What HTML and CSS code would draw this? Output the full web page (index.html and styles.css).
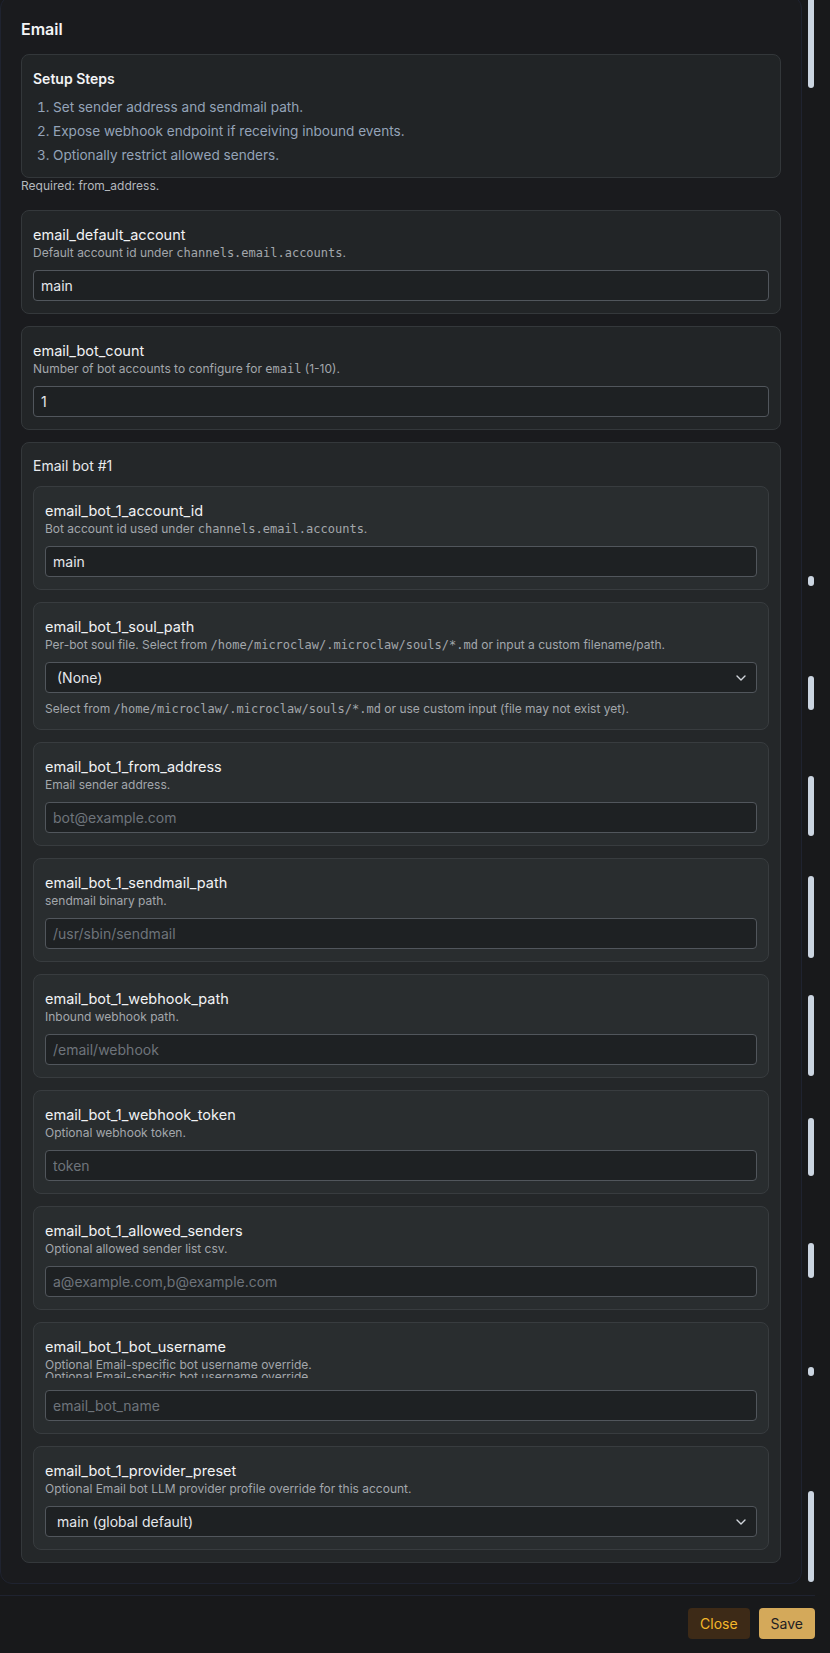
FILE: index.html
```html
<!DOCTYPE html>
<html lang="en">
<head>
<meta charset="utf-8">
<title>Email</title>
<link rel="stylesheet" href="styles.css">
</head>
<body>
<div class="dialog">
  <div class="scroll">
    <section class="panel">
      <h2 class="panel-title">Email</h2>
      <div class="steps">
        <div class="steps-title">Setup Steps</div>
        <ol class="steps-list">
          <li>Set sender address and sendmail path.</li>
          <li>Expose webhook endpoint if receiving inbound events.</li>
          <li>Optionally restrict allowed senders.</li>
        </ol>
      </div>
      <p class="required">Required: from_address.</p>

      <div class="card">
        <div class="label">email_default_account</div>
        <div class="desc">Default account id under <code>channels.email.accounts</code>.</div>
        <input class="field" type="text" value="main">
      </div>

      <div class="card">
        <div class="label">email_bot_count</div>
        <div class="desc">Number of bot accounts to configure for <code>email</code> (1-10).</div>
        <input class="field" type="text" value="1">
      </div>

      <div class="group">
        <div class="group-title">Email bot #1</div>

        <div class="card inner">
          <div class="label">email_bot_1_account_id</div>
          <div class="desc">Bot account id used under <code>channels.email.accounts</code>.</div>
          <input class="field" type="text" value="main">
        </div>

        <div class="card inner">
          <div class="label">email_bot_1_soul_path</div>
          <div class="desc">Per-bot soul file. Select from <code>/home/microclaw/.microclaw/souls/*.md</code> or input a custom filename/path.</div>
          <div class="select-wrap">
            <select class="field select"><option>(None)</option></select>
            <svg class="chev" width="10" height="6" viewBox="0 0 10 6"><path d="M1 1l4 4 4-4" fill="none" stroke="#d1d5db" stroke-width="1.4" stroke-linecap="round" stroke-linejoin="round"/></svg>
          </div>
          <div class="hint">Select from <code>/home/microclaw/.microclaw/souls/*.md</code> or use custom input (file may not exist yet).</div>
        </div>

        <div class="card inner">
          <div class="label">email_bot_1_from_address</div>
          <div class="desc">Email sender address.</div>
          <input class="field" type="text" placeholder="bot@example.com">
        </div>

        <div class="card inner">
          <div class="label">email_bot_1_sendmail_path</div>
          <div class="desc">sendmail binary path.</div>
          <input class="field" type="text" placeholder="/usr/sbin/sendmail">
        </div>

        <div class="card inner">
          <div class="label">email_bot_1_webhook_path</div>
          <div class="desc">Inbound webhook path.</div>
          <input class="field" type="text" placeholder="/email/webhook">
        </div>

        <div class="card inner">
          <div class="label">email_bot_1_webhook_token</div>
          <div class="desc">Optional webhook token.</div>
          <input class="field" type="text" placeholder="token">
        </div>

        <div class="card inner">
          <div class="label">email_bot_1_allowed_senders</div>
          <div class="desc">Optional allowed sender list csv.</div>
          <input class="field" type="text" placeholder="a@example.com,b@example.com">
        </div>

        <div class="card inner">
          <div class="label">email_bot_1_bot_username</div>
          <div class="desc">Optional Email-specific bot username override.</div>
          <div class="desc ghost" aria-hidden="true"><span>Optional Email-specific bot username override.</span></div>
          <input class="field after-ghost" type="text" placeholder="email_bot_name">
        </div>

        <div class="card inner">
          <div class="label">email_bot_1_provider_preset</div>
          <div class="desc">Optional Email bot LLM provider profile override for this account.</div>
          <div class="select-wrap">
            <select class="field select"><option>main (global default)</option></select>
            <svg class="chev" width="10" height="6" viewBox="0 0 10 6"><path d="M1 1l4 4 4-4" fill="none" stroke="#d1d5db" stroke-width="1.4" stroke-linecap="round" stroke-linejoin="round"/></svg>
          </div>
        </div>
      </div>
    </section>

    <div class="thumb t1"></div>
    <div class="thumb t2"></div>
    <div class="thumb t3"></div>
    <div class="thumb t4"></div>
    <div class="thumb t5"></div>
    <div class="thumb t6"></div>
    <div class="thumb t7"></div>
    <div class="thumb t8"></div>
    <div class="thumb t9"></div>
    <div class="thumb t10"></div>
  </div>
  <footer class="footer">
    <button class="btn btn-close">Close</button>
    <button class="btn btn-save">Save</button>
  </footer>
</div>
</body>
</html>
```
FILE: styles.css
```css
* { box-sizing: border-box; }

html, body {
  margin: 0;
  padding: 0;
  background: #18191b;
}

body {
  font-family: Inter, "Noto Sans", "Liberation Sans", sans-serif;
  color: #e5e7eb;
  width: 830px;
  height: 1653px;
  overflow: hidden;
}

.dialog {
  width: 815px;
}

.scroll {
  position: relative;
  height: 1595px;
  overflow: hidden;
}

.panel {
  width: 802px;
  margin-top: -4px;
  background: #1a1b1e;
  border: 1px solid #1f2330;
  border-radius: 12px;
  padding: 20px 20px 20px 20px;
}

.panel-title {
  margin: 0 0 13px;
  font-size: 16px;
  line-height: 24px;
  font-weight: 600;
  color: #f3f4f6;
}

.steps {
  background: #212426;
  border: 1px solid #33373a;
  border-radius: 8px;
  padding: 14px 11px 12px;
}

.steps-title {
  font-size: 14px;
  line-height: 20px;
  font-weight: 600;
  color: #f3f4f6;
  margin-bottom: 8px;
}

.steps-list {
  margin: 0;
  padding-left: 20px;
  color: #94a3b8;
  font-size: 13.6px;
  line-height: 20px;
}

.steps-list li + li {
  margin-top: 4px;
}

.required {
  margin: 0 0 16px;
  font-size: 12px;
  line-height: 16px;
  color: #b4b8bd;
}

.card {
  background: #222527;
  border: 1px solid #34383b;
  border-radius: 8px;
  padding: 14px 11px 12px;
  margin-bottom: 12px;
}

.card.inner {
  background: #292d2f;
  border-color: #383c3f;
}

.group .card.inner:last-child {
  margin-bottom: 0;
}

.label {
  font-size: 14.5px;
  line-height: 20px;
  font-weight: 400;
  color: #f1f2f4;
}

.desc, .hint {
  font-size: 12px;
  line-height: 16px;
  color: #a3a7ac;
}

.hint {
  margin-top: 8px;
}

code {
  font-family: "DejaVu Sans Mono", "Liberation Mono", monospace;
  font-size: 12px;
}

.ghost {
  height: 6px;
  margin-top: -1px;
  overflow: hidden;
}

.ghost span {
  display: block;
  margin-top: -3px;
}

.field {
  display: block;
  width: 100%;
  height: 31px;
  margin-top: 9px;
  background: #1e2123;
  border: 1px solid #51565c;
  border-radius: 4px;
  padding: 0 7px;
  font-family: Inter, "Noto Sans", "Liberation Sans", sans-serif;
  font-size: 14px;
  color: #e5e7eb;
  outline: none;
}

.field::placeholder {
  color: #6e747b;
}

.field.after-ghost {
  margin-top: 12px;
}

.select-wrap {
  position: relative;
}

.select {
  appearance: none;
  -webkit-appearance: none;
  padding: 0 11px;
}

.chev {
  position: absolute;
  right: 11px;
  top: 13px;
}

.group {
  background: #242729;
  border: 1px solid #34383b;
  border-radius: 8px;
  padding: 12px 11px 12px;
}

.group-title {
  font-size: 14px;
  line-height: 22px;
  color: #e8eaed;
  margin-bottom: 9px;
}

.thumb {
  position: absolute;
  left: 808px;
  width: 6px;
  background: #cbd5e1;
  border-radius: 3px;
}
.t1 { top: -6px; height: 94px; }
.t2 { top: 576px; height: 10px; }
.t3 { top: 676px; height: 34px; }
.t4 { top: 776px; height: 60px; }
.t5 { top: 876px; height: 82px; }
.t6 { top: 995px; height: 81px; }
.t7 { top: 1118px; height: 58px; }
.t8 { top: 1243px; height: 35px; }
.t9 { top: 1367px; height: 9px; }
.t10 { top: 1491px; height: 91px; }

.footer {
  border-top: 1px solid #1f2330;
  padding-top: 12px;
  display: flex;
  justify-content: flex-end;
  gap: 9px;
}

.btn {
  height: 31px;
  border: 0;
  border-radius: 4px;
  padding: 0 12px;
  font-family: Inter, "Noto Sans", "Liberation Sans", sans-serif;
  font-size: 14px;
  line-height: 31px;
}

.btn-close {
  background: #3d2a17;
  color: #f5b82a;
}

.btn-save {
  background: #d4a95a;
  color: #1f2023;
}
```
